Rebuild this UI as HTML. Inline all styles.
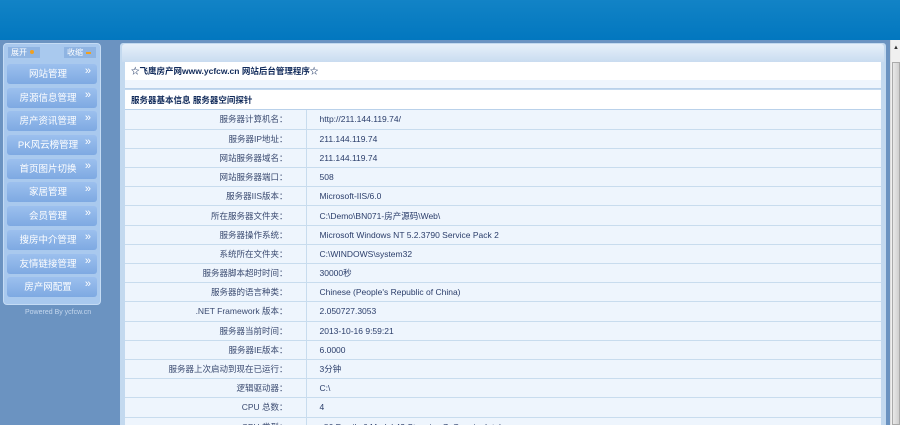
<!DOCTYPE html>
<html><head><meta charset="utf-8">
<style>
*{margin:0;padding:0;box-sizing:border-box}
html,body{width:900px;height:425px;overflow:hidden}
body{background:#6b93c1;font-family:"Liberation Sans","Noto Sans CJK SC",sans-serif;font-size:8.5px;position:relative}
#hd{position:absolute;left:0;top:0;width:900px;height:40px;background:linear-gradient(#1283c6,#0277bf)}
#side{position:absolute;left:3px;top:43px;width:98px;height:262px;background:#a9c9ee;border-radius:4px;border:1px solid #c5dcf5}
.tb{position:absolute;top:3px;height:11px;background:#8fb4e2;color:#fff;font-size:8px;line-height:11px;padding-left:3px}
.tb i{display:inline-block;width:4px;height:4px;border-radius:2px;background:#f0a020;margin-left:3px;vertical-align:1px}
.mi{position:absolute;left:3px;width:90px;height:20px;border-radius:3px;background:linear-gradient(#9cc0ee,#7ea9e2);color:#fff;font-size:9.5px;line-height:21px;text-align:center;padding-right:8px}
.mi b{position:absolute;right:6px;top:-3px;font-weight:normal;font-size:11px}
#pw{position:absolute;left:25px;top:309px;color:#c4d7ee;font-size:7px}
#main{position:absolute;left:120px;top:43px;width:766px;height:400px;background:#c3d9ef;border-radius:3px 3px 0 0}
#mtop{position:absolute;left:2px;top:1px;right:2px;height:18px;background:linear-gradient(#e7f0fa,#c9dcf0);border-radius:3px 3px 0 0}
.w{position:absolute;left:5px;width:756px;background:#fff;font-weight:bold;color:#102a5a;font-size:8.5px;padding-left:6px}
table{position:absolute;left:5px;top:67px;width:756px;border-collapse:collapse;background:#eef5fd}
td{height:19.2px;border-bottom:1px solid #c8dcee;color:#3a4a70;font-size:8.5px}
td.l{width:181px;text-align:right;padding-right:18px;border-right:1px solid #c8dcee}
td.v{padding-left:13px;color:#2a3d6a}
#sb{position:absolute;left:890px;top:40px;width:10px;height:385px;background:#f0f0f0;border-left:1px solid #ddd}
#sb span{position:absolute;left:2px;top:5px;font-size:6px;color:#333}
#sb div{position:absolute;left:1px;top:22px;width:8px;height:363px;background:linear-gradient(90deg,#e8e8e8,#cfcfcf);border:1px solid #aaa}
</style></head><body>
<div id="hd"></div>
<div id="side">
<div class="tb" style="left:4px;width:32px">展开<i></i></div>
<div class="tb" style="left:60px;width:32px">收缩<i style="width:5px;height:2px;border-radius:0"></i></div>
<div class="mi" style="top:20px">网站管理<b>»</b></div>
<div class="mi" style="top:44px">房源信息管理<b>»</b></div>
<div class="mi" style="top:67px">房产资讯管理<b>»</b></div>
<div class="mi" style="top:91px">PK风云榜管理<b>»</b></div>
<div class="mi" style="top:115px">首页图片切换<b>»</b></div>
<div class="mi" style="top:138px">家居管理<b>»</b></div>
<div class="mi" style="top:162px">会员管理<b>»</b></div>
<div class="mi" style="top:186px">搜房中介管理<b>»</b></div>
<div class="mi" style="top:210px">友情链接管理<b>»</b></div>
<div class="mi" style="top:233px">房产网配置<b>»</b></div>
</div>
<div id="pw">Powered By ycfcw.cn</div>
<div id="main">
<div id="mtop"></div>
<div class="w" style="top:19px;height:18px;line-height:18px">☆飞鹰房产网www.ycfcw.cn 网站后台管理程序☆</div>
<div style="position:absolute;left:5px;top:37px;width:756px;height:9px;background:#eef5fd;border-bottom:1px solid #b9d1ea"></div>
<div class="w" style="top:47px;height:20px;line-height:20px;border-bottom:1px solid #b9d1ea">服务器基本信息 服务器空间探针</div>
<table>
<tr><td class="l">服务器计算机名：</td><td class="v">http://211.144.119.74/</td></tr>
<tr><td class="l">服务器IP地址：</td><td class="v">211.144.119.74</td></tr>
<tr><td class="l">网站服务器域名：</td><td class="v">211.144.119.74</td></tr>
<tr><td class="l">网站服务器端口：</td><td class="v">508</td></tr>
<tr><td class="l">服务器IIS版本：</td><td class="v">Microsoft-IIS/6.0</td></tr>
<tr><td class="l">所在服务器文件夹：</td><td class="v">C:\Demo\BN071-房产源码\Web\</td></tr>
<tr><td class="l">服务器操作系统：</td><td class="v">Microsoft Windows NT 5.2.3790 Service Pack 2</td></tr>
<tr><td class="l">系统所在文件夹：</td><td class="v">C:\WINDOWS\system32</td></tr>
<tr><td class="l">服务器脚本超时时间：</td><td class="v">30000秒</td></tr>
<tr><td class="l">服务器的语言种类：</td><td class="v">Chinese (People's Republic of China)</td></tr>
<tr><td class="l">.NET Framework 版本：</td><td class="v">2.050727.3053</td></tr>
<tr><td class="l">服务器当前时间：</td><td class="v">2013-10-16 9:59:21</td></tr>
<tr><td class="l">服务器IE版本：</td><td class="v">6.0000</td></tr>
<tr><td class="l">服务器上次启动到现在已运行：</td><td class="v">3分钟</td></tr>
<tr><td class="l">逻辑驱动器：</td><td class="v">C:\</td></tr>
<tr><td class="l">CPU 总数：</td><td class="v">4</td></tr>
<tr><td class="l">CPU 类型：</td><td class="v">x86 Family 6 Model 42 Stepping 7, GenuineIntel</td></tr>
</table>
</div>
<div id="sb"><span>▲</span><div></div></div>
</body></html>
